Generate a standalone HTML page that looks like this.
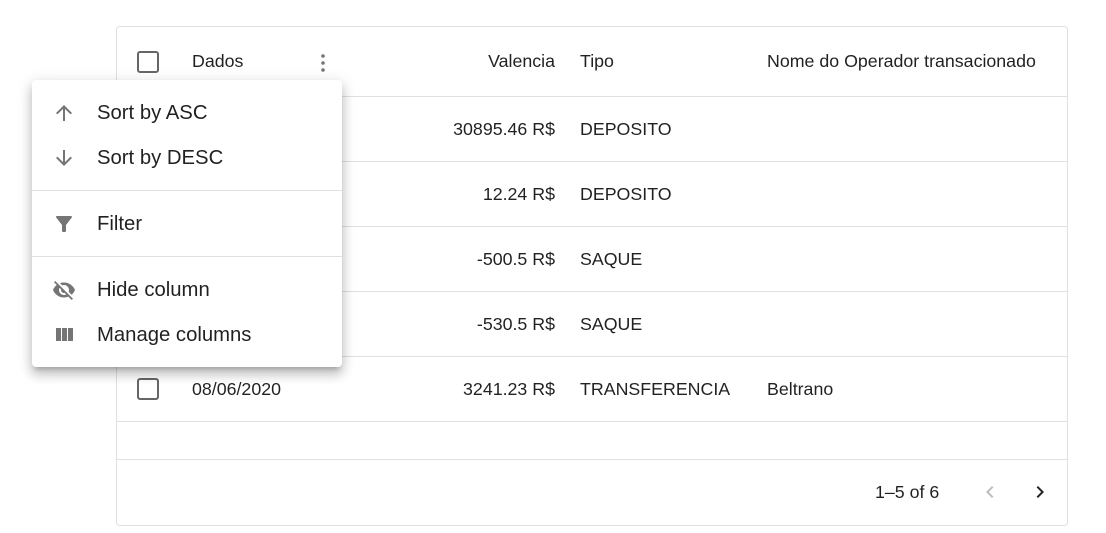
<!DOCTYPE html><html><head><style>
body{margin:0;width:1106px;height:533px;background:#fff;font-family:"Liberation Sans",sans-serif;color:rgba(0,0,0,.87);position:relative;overflow:hidden}
.grid{position:absolute;left:116px;top:26px;width:950px;height:498px;border:1px solid #e0e0e0;border-radius:4px}
.hl{position:absolute;left:0;right:0;height:1px;background:#e0e0e0}
.t{position:absolute;font-size:17.8px;white-space:nowrap}
.r{text-align:right}
.cb{position:absolute;left:20px;width:18px;height:18px;border:2px solid #666;border-radius:3px}
.menu{position:absolute;left:32px;top:80px;width:310px;height:287px;background:#fff;border-radius:4px;box-shadow:0 5px 5px -3px rgba(0,0,0,.2),0 8px 10px 1px rgba(0,0,0,.14),0 3px 14px 2px rgba(0,0,0,.12)}
.mi{position:absolute;left:65px;font-size:20.3px;color:rgba(0,0,0,.87)}
.ic{position:absolute;left:20px}
.dv{position:absolute;left:0;right:0;height:1px;background:#e0e0e0}
</style></head><body>
<div class="grid">
 <div class="cb" style="top:24px"></div>
 <div class="t" style="left:75px;top:24px">Dados</div>
 <svg style="position:absolute;left:196px;top:25px" width="20" height="22" viewBox="0 0 20 22"><circle cx="10" cy="4" r="1.8" fill="#757575"/><circle cx="10" cy="11" r="1.8" fill="#757575"/><circle cx="10" cy="18" r="1.8" fill="#757575"/></svg>
 <div class="t r" style="right:512px;top:24px">Valencia</div>
 <div class="t" style="left:463px;top:24px">Tipo</div>
 <div class="t" style="left:650px;top:24px">Nome do Operador transacionado</div>
 <div class="hl" style="top:69px"></div>
 <div class="t r" style="right:512px;top:92px">30895.46 R$</div><div class="t" style="left:463px;top:92px">DEPOSITO</div>
 <div class="hl" style="top:134px"></div>
 <div class="t r" style="right:512px;top:157px">12.24 R$</div><div class="t" style="left:463px;top:157px">DEPOSITO</div>
 <div class="hl" style="top:199px"></div>
 <div class="t r" style="right:512px;top:222px">-500.5 R$</div><div class="t" style="left:463px;top:222px">SAQUE</div>
 <div class="hl" style="top:264px"></div>
 <div class="t r" style="right:512px;top:287px">-530.5 R$</div><div class="t" style="left:463px;top:287px">SAQUE</div>
 <div class="hl" style="top:329px"></div>
 <div class="cb" style="top:351px"></div>
 <div class="t" style="left:75px;top:352px">08/06/2020</div>
 <div class="t r" style="right:512px;top:352px">3241.23 R$</div><div class="t" style="left:463px;top:352px">TRANSFERENCIA</div><div class="t" style="left:650px;top:352px">Beltrano</div>
 <div class="hl" style="top:394px"></div>
 <div class="hl" style="top:432px"></div>
 <div class="t" style="left:758px;top:455px">1–5 of 6</div>
 <svg style="position:absolute;left:861px;top:453px" width="24" height="24" viewBox="0 0 24 24"><path d="M15.4 7.4L14 6l-6 6 6 6 1.4-1.4L10.8 12z" fill="#bdbdbd"/></svg>
 <svg style="position:absolute;left:911px;top:453px" width="24" height="24" viewBox="0 0 24 24"><path d="M10 6L8.6 7.4 13.2 12l-4.6 4.6L10 18l6-6z" fill="#222"/></svg>
</div>
<div class="menu">
 <svg class="ic" style="top:21px" width="24" height="24" viewBox="0 0 24 24"><path d="M4 12l1.41 1.41L11 7.830V20h2V7.83l5.58 5.59L20 12l-8-8-8 8z" fill="#757575"/></svg>
 <div class="mi" style="top:22px">Sort by ASC</div>
 <svg class="ic" style="top:66px" width="24" height="24" viewBox="0 0 24 24"><path d="M20 12l-1.41-1.41L13 16.17V4h-2v12.17l-5.58-5.59L4 12l8 8 8-8z" fill="#757575"/></svg>
 <div class="mi" style="top:67px">Sort by DESC</div>
 <div class="dv" style="top:110px"></div>
 <svg class="ic" style="top:132px" width="24" height="24" viewBox="0 0 24 24"><path d="M4.25 5.61C6.27 8.2 10 13 10 13v6c0 .55.45 1 1 1h2c.55 0 1-.45 1-1v-6s3.72-4.8 5.74-7.39A.998.998 0 0019 4H5c-.83 0-1.3.95-.75 1.61z" fill="#757575"/></svg>
 <div class="mi" style="top:133px">Filter</div>
 <div class="dv" style="top:176px"></div>
 <svg class="ic" style="top:198px" width="24" height="24" viewBox="0 0 24 24"><path d="M12 7c2.76 0 5 2.24 5 5 0 .65-.13 1.26-.36 1.83l2.92 2.92c1.51-1.26 2.7-2.89 3.43-4.75-1.73-4.39-6-7.5-11-7.5-1.4 0-2.74.25-3.98.7l2.16 2.16C10.74 7.13 11.35 7 12 7zM2 4.27l2.28 2.28.46.46C3.08 8.3 1.78 10.02 1 12c1.73 4.39 6 7.5 11 7.5 1.55 0 3.03-.3 4.38-.84l.42.42L19.73 22 21 20.73 3.27 3 2 4.27zM7.53 9.8l1.55 1.55c-.05.21-.08.43-.08.65 0 1.66 1.34 3 3 3 .22 0 .44-.03.65-.08l1.55 1.55c-.67.33-1.41.53-2.2.53-2.76 0-5-2.24-5-5 0-.79.2-1.53.53-2.2z" fill="#757575"/></svg>
 <div class="mi" style="top:199px">Hide column</div>
 <svg class="ic" style="top:243px" width="24" height="24" viewBox="0 0 24 24"><path d="M10 18h5V5h-5v13zm-6 0h5V5H4v13zM16 5v13h5V5h-5z" fill="#757575"/></svg>
 <div class="mi" style="top:244px">Manage columns</div>
</div>
</body></html>
